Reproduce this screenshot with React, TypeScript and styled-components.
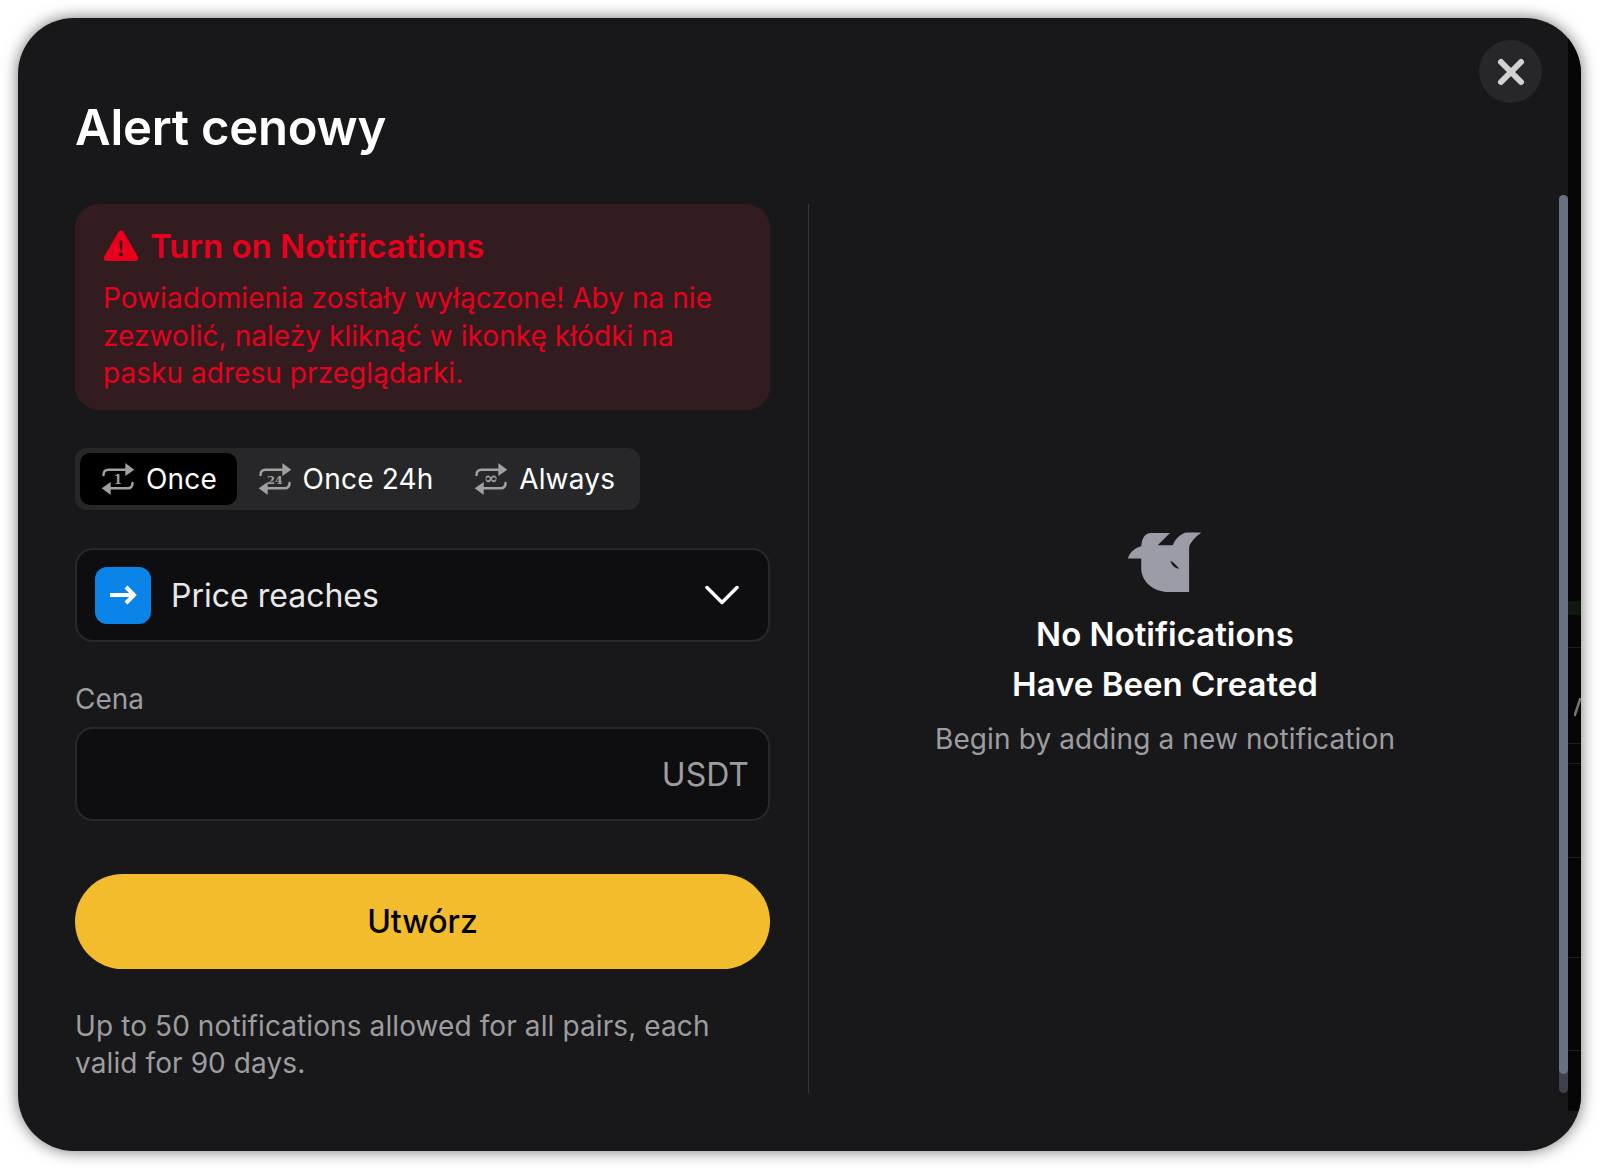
import styled, { createGlobalStyle } from "styled-components";

const colors = {
  panel: "#18181a",
  field: "#0e0e10",
  border: "#27282c",
  chip: "#27272a",
  textMain: "#ffffff",
  textSoft: "#9d9da0",
  red: "#e8001c",
  yellow: "#f3bc2c",
  blue: "#0a84e8",
};

const CHART_LINES = [629, 725, 745, 839, 939, 1032];

const GlobalStyle = createGlobalStyle`
  html, body {
    margin: 0;
    background: #ffffff;
  }
  body {
    font-family: Inter, "Noto Sans", sans-serif;
    -webkit-font-smoothing: antialiased;
  }
`;

const Page = styled.div`
  width: 1600px;
  height: 1169px;
  padding: 18px 19px 18px 18px;
  box-sizing: border-box;
  overflow: hidden;
`;

const Modal = styled.div`
  position: relative;
  height: 100%;
  box-sizing: border-box;
  padding: 74px 47px 0 57px;
  background: ${colors.panel};
  border-radius: 56px;
  box-shadow: 0 0 16px rgba(0, 0, 0, 0.55);
  overflow: hidden;
`;

const Gutter = styled.div`
  position: absolute;
  top: 0;
  right: 0;
  bottom: 40px;
  width: 13px;
  background: #060607;
`;

const ChartLine = styled.div<{ $top: number }>`
  position: absolute;
  left: 0;
  right: 0;
  top: ${(p) => p.$top}px;
  height: 1px;
  background: #202022;
`;

const ChartBand = styled.div`
  position: absolute;
  left: 0;
  right: 0;
  top: 583px;
  height: 14px;
  background: #10180f;
`;

const ChartGlyph = styled.svg`
  position: absolute;
  right: 0;
  top: 680px;
`;

const Scrollbar = styled.div`
  position: absolute;
  top: 177px;
  right: 13px;
  width: 9px;
  height: 898px;
  border-radius: 5px;
  background: #3e414c;
`;

const ScrollThumb = styled.div`
  height: 879px;
  border-radius: 5px;
  background: #69707f;
`;

const CloseButton = styled.button`
  position: absolute;
  top: 22px;
  right: 39px;
  width: 63px;
  height: 63px;
  padding: 0;
  border: 0;
  border-radius: 50%;
  background: ${colors.chip};
  display: flex;
  align-items: center;
  justify-content: center;
`;

const Title = styled.h1`
  margin: 0 0 40px;
  font-size: 49px;
  line-height: 72px;
  font-weight: 600;
  letter-spacing: -0.25px;
  color: ${colors.textMain};
`;

const Columns = styled.div`
  display: grid;
  grid-template-columns: 695px 1fr;
  column-gap: 38px;
`;

const FormColumn = styled.div`
  display: flex;
  flex-direction: column;
`;

const EmptyColumn = styled.div`
  height: 889px;
  border-left: 1px solid #34353a;
  display: flex;
  flex-direction: column;
  align-items: center;
  justify-content: flex-start;
  padding: 328px 13px 0 0;
  box-sizing: border-box;
`;

const AlertBox = styled.div`
  height: 206px;
  box-sizing: border-box;
  padding: 21px 28px 0;
  background: #331c20;
  border-radius: 24px;
`;

const AlertHead = styled.div`
  display: flex;
  align-items: center;
  gap: 11px;
  height: 42px;
  font-size: 33px;
  font-weight: 600;
  color: ${colors.red};
`;

const AlertBody = styled.div`
  margin-top: 13px;
  font-size: 28px;
  line-height: 37.5px;
  letter-spacing: 0.05px;
  color: ${colors.red};
`;

const Tabs = styled.div`
  display: flex;
  align-self: flex-start;
  margin-top: 38px;
  padding: 5px;
  background: ${colors.chip};
  border-radius: 12px;
`;

const Tab = styled.div<{ $active?: boolean }>`
  display: flex;
  align-items: center;
  gap: 11px;
  height: 52px;
  padding: 0 19.5px 0 21px;
  border-radius: 10px;
  background: ${(p) => (p.$active ? "#000000" : "transparent")};
  font-size: 28px;
  letter-spacing: 0.2px;
  color: ${colors.textMain};
`;

const SelectBox = styled.div`
  display: flex;
  align-items: center;
  height: 94px;
  margin-top: 38px;
  padding: 0 29px 0 18px;
  box-sizing: border-box;
  background: ${colors.field};
  border: 2px solid ${colors.border};
  border-radius: 18px;
  font-size: 32px;
  color: #e8e8ea;
`;

const SelectIcon = styled.div`
  width: 56px;
  height: 57px;
  margin-right: 20px;
  border-radius: 12px;
  background: ${colors.blue};
  display: flex;
  align-items: center;
  justify-content: center;
`;

const SelectLabel = styled.span`
  flex: 1;
`;

const FieldLabel = styled.div`
  margin-top: 40px;
  font-size: 28px;
  line-height: 34px;
  color: ${colors.textSoft};
`;

const PriceField = styled.div`
  display: flex;
  align-items: center;
  justify-content: flex-end;
  height: 94px;
  margin-top: 11px;
  padding: 0 19px;
  box-sizing: border-box;
  background: ${colors.field};
  border: 2px solid ${colors.border};
  border-radius: 18px;
  font-size: 32px;
  color: ${colors.textSoft};
`;

const SubmitButton = styled.button`
  height: 95px;
  margin-top: 53px;
  border: 0;
  border-radius: 48px;
  background: ${colors.yellow};
  font-family: inherit;
  font-size: 32px;
  font-weight: 500;
  color: #000000;
`;

const Note = styled.p`
  margin: 39px 0 0;
  font-size: 28px;
  line-height: 37px;
  letter-spacing: 0.1px;
  color: ${colors.textSoft};
`;

const EmptyTitle = styled.div`
  margin-top: 15px;
  font-size: 33px;
  line-height: 50px;
  font-weight: 600;
  text-align: center;
  color: ${colors.textMain};
`;

const EmptyText = styled.div`
  margin-top: 12px;
  font-size: 28px;
  line-height: 36px;
  letter-spacing: 0.12px;
  color: ${colors.textSoft};
`;

function RepeatIcon({ label, size = 12 }: { label: string; size?: number }) {
  return (
    <svg width="34" height="34" viewBox="0 0 34 34" fill="none">
      <path
        d="M2.5 13C2.5 9.5 4.5 7.7 7.5 7.7H25"
        stroke="#a0a0a2"
        strokeWidth="2.5"
        strokeLinecap="round"
      />
      <path d="M24.3 1L33.3 7.7L24.3 14Z" fill="#a0a0a2" strokeLinejoin="round" />
      <path
        d="M31.5 21C31.5 24.5 29.5 26.3 26.5 26.3H9"
        stroke="#a0a0a2"
        strokeWidth="2.5"
        strokeLinecap="round"
      />
      <path d="M9.7 20L0.7 26.3L9.7 33Z" fill="#a0a0a2" strokeLinejoin="round" />
      <text
        x="17"
        y="21.5"
        textAnchor="middle"
        fontSize={size}
        fontWeight="700"
        fontFamily="'DejaVu Serif', serif"
        fill="#a0a0a2"
      >
        {label}
      </text>
    </svg>
  );
}

export default function App() {
  return (
    <>
      <GlobalStyle />
      <Page>
        <Modal>
          <Gutter>
            <ChartBand />
            {CHART_LINES.map((top) => (
              <ChartLine key={top} $top={top} />
            ))}
            <ChartGlyph width="7" height="19" viewBox="0 0 7 19">
              <path d="M6.5 0L0.5 18" stroke="#77777a" strokeWidth="2.5" />
            </ChartGlyph>
          </Gutter>
          <Scrollbar>
            <ScrollThumb />
          </Scrollbar>
          <CloseButton>
            <svg width="30" height="30" viewBox="0 0 30 30">
              <path
                d="M5 5L25 25M25 5L5 25"
                stroke="#d2d2d2"
                strokeWidth="6"
                strokeLinecap="round"
              />
            </svg>
          </CloseButton>
          <Title>Alert cenowy</Title>
          <Columns>
            <FormColumn>
              <AlertBox>
                <AlertHead>
                  <svg width="36" height="32" viewBox="0 0 36 32">
                    <path
                      fillRule="evenodd"
                      fill={colors.red}
                      d="M15.4 2C16.6 0 19.4 0 20.6 2L34.8 26.6C36 28.7 34.6 31 32.2 31H3.8C1.4 31 0 28.7 1.2 26.6ZM16.5 10.5L17 20H19L19.5 10.5ZM18 22.3A2 2 0 1 0 18 26.3A2 2 0 1 0 18 22.3Z"
                    />
                  </svg>
                  Turn on Notifications
                </AlertHead>
                <AlertBody>
                  Powiadomienia zostały wyłączone! Aby na nie
                  <br />
                  zezwolić, należy kliknąć w ikonkę kłódki na
                  <br />
                  pasku adresu przeglądarki.
                </AlertBody>
              </AlertBox>
              <Tabs>
                <Tab $active>
                  <RepeatIcon label="1" />
                  Once
                </Tab>
                <Tab>
                  <RepeatIcon label="24" size={11} />
                  Once 24h
                </Tab>
                <Tab>
                  <RepeatIcon label="∞" size={17} />
                  Always
                </Tab>
              </Tabs>
              <SelectBox>
                <SelectIcon>
                  <svg width="30" height="22" viewBox="0 0 30 22" fill="none">
                    <path
                      d="M2 11H26M18 3L26 11L18 19"
                      stroke="#ffffff"
                      strokeWidth="4"
                    />
                  </svg>
                </SelectIcon>
                <SelectLabel>Price reaches</SelectLabel>
                <svg width="34" height="20" viewBox="0 0 34 20" fill="none">
                  <path
                    d="M2 2.5L17 17.5L32 2.5"
                    stroke="#ffffff"
                    strokeWidth="3.5"
                    strokeLinecap="round"
                    strokeLinejoin="round"
                  />
                </svg>
              </SelectBox>
              <FieldLabel>Cena</FieldLabel>
              <PriceField>USDT</PriceField>
              <SubmitButton>Utwórz</SubmitButton>
              <Note>
                Up to 50 notifications allowed for all pairs, each
                <br />
                valid for 90 days.
              </Note>
            </FormColumn>
            <EmptyColumn>
              <svg width="74" height="62" viewBox="80 66 224 186">
                <path
                  fillRule="evenodd"
                  fill="#9b9ca6"
                  d="M80 145C85 125 103 112 120 108C122 85 130 68 150 68L207 68L170 105L215 105C225 85 240 68 260 67L302 67C285 80 270 95 265 110L265 247L205 247C150 247 120 210 120 175L120 145ZM208 152C212 165 222 176 235 176C225 165 218 156 208 152Z"
                />
              </svg>
              <EmptyTitle>
                No Notifications
                <br />
                Have Been Created
              </EmptyTitle>
              <EmptyText>Begin by adding a new notification</EmptyText>
            </EmptyColumn>
          </Columns>
        </Modal>
      </Page>
    </>
  );
}
